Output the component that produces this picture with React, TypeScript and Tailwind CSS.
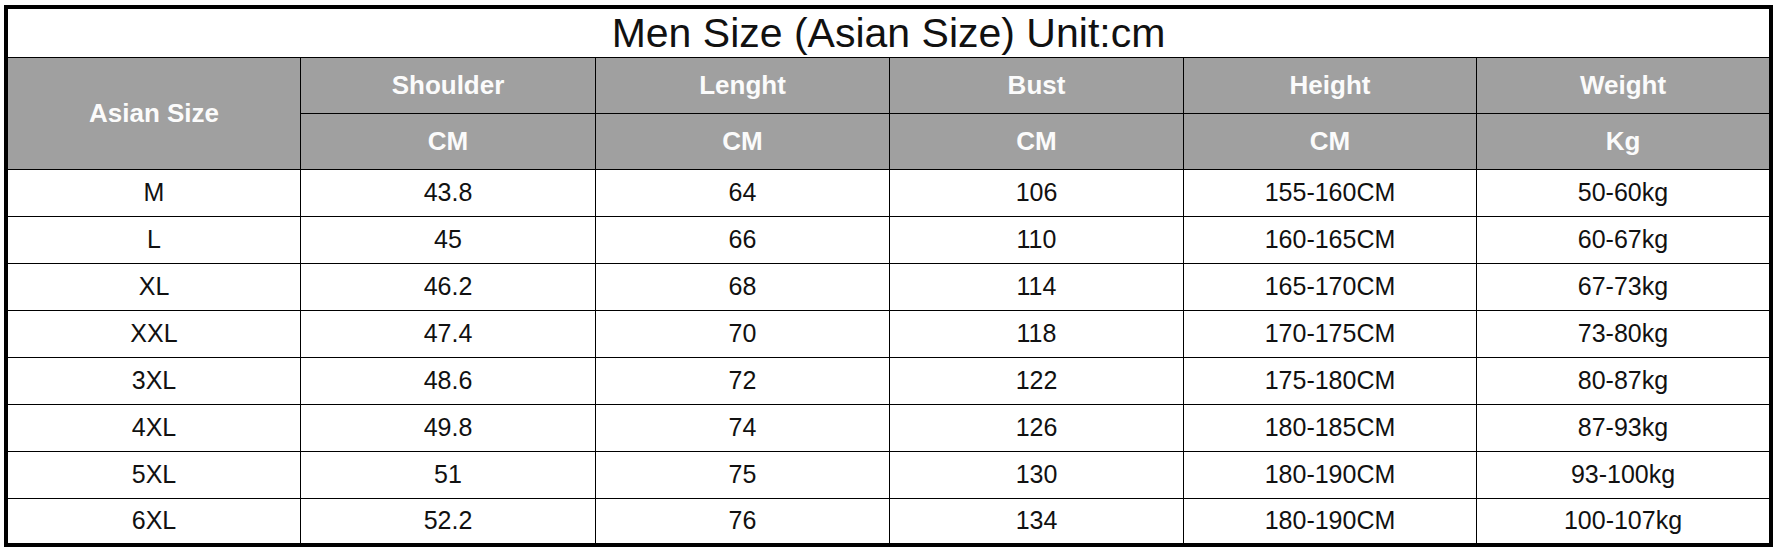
import React from 'react';

const columns = [
  { name: 'Shoulder', unit: 'CM' },
  { name: 'Lenght', unit: 'CM' },
  { name: 'Bust', unit: 'CM' },
  { name: 'Height', unit: 'CM' },
  { name: 'Weight', unit: 'Kg' },
];

const rows: string[][] = [
  ['M', '43.8', '64', '106', '155-160CM', '50-60kg'],
  ['L', '45', '66', '110', '160-165CM', '60-67kg'],
  ['XL', '46.2', '68', '114', '165-170CM', '67-73kg'],
  ['XXL', '47.4', '70', '118', '170-175CM', '73-80kg'],
  ['3XL', '48.6', '72', '122', '175-180CM', '80-87kg'],
  ['4XL', '49.8', '74', '126', '180-185CM', '87-93kg'],
  ['5XL', '51', '75', '130', '180-190CM', '93-100kg'],
  ['6XL', '52.2', '76', '134', '180-190CM', '100-107kg'],
];

const gridCols = 'grid grid-cols-[292px_295px_294px_294px_293px_293px]';

const SizeChart: React.FC = () => {
  return (
    <div className="ml-[4px] mt-[5px] w-[1769px] h-[542px] border-4 border-black bg-white font-['Liberation_Sans',Arial,sans-serif] overflow-hidden">
      {/* title */}
      <div className="h-[48px] flex items-center justify-center text-[41px] leading-none text-[#111] pt-[1px]">
        Men Size (Asian Size) Unit:cm
      </div>

      {/* header */}
      <div className={`${gridCols} grid-rows-[56px_56px] bg-[#a0a0a0] text-[#fbfbfb] font-bold text-[26px]`}>
        <div className="row-span-2 border-t border-black flex items-center justify-center">
          Asian Size
        </div>
        {columns.map((col) => (
          <div key={col.name} className="border-t border-l border-black flex items-center justify-center">
            {col.name}
          </div>
        ))}
        {columns.map((col) => (
          <div key={col.name + '-unit'} className="border-t border-l border-black flex items-center justify-center">
            {col.unit}
          </div>
        ))}
      </div>

      {/* body */}
      {rows.map((row, i) => (
        <div
          key={row[0]}
          className={`${gridCols} ${i === rows.length - 1 ? 'h-[45px]' : 'h-[47px]'} text-[25px] text-[#111]`}
        >
          {row.map((cell, j) => (
            <div
              key={j}
              className={`border-t border-black flex items-center justify-center ${j > 0 ? 'border-l' : ''}`}
            >
              {cell}
            </div>
          ))}
        </div>
      ))}
    </div>
  );
};

export default function App() {
  return (
    <div className="w-[1778px] h-[551px] bg-white">
      <div className="pt-0">
        <SizeChart />
      </div>
      <div className="hidden" />
    </div>
  );
}
